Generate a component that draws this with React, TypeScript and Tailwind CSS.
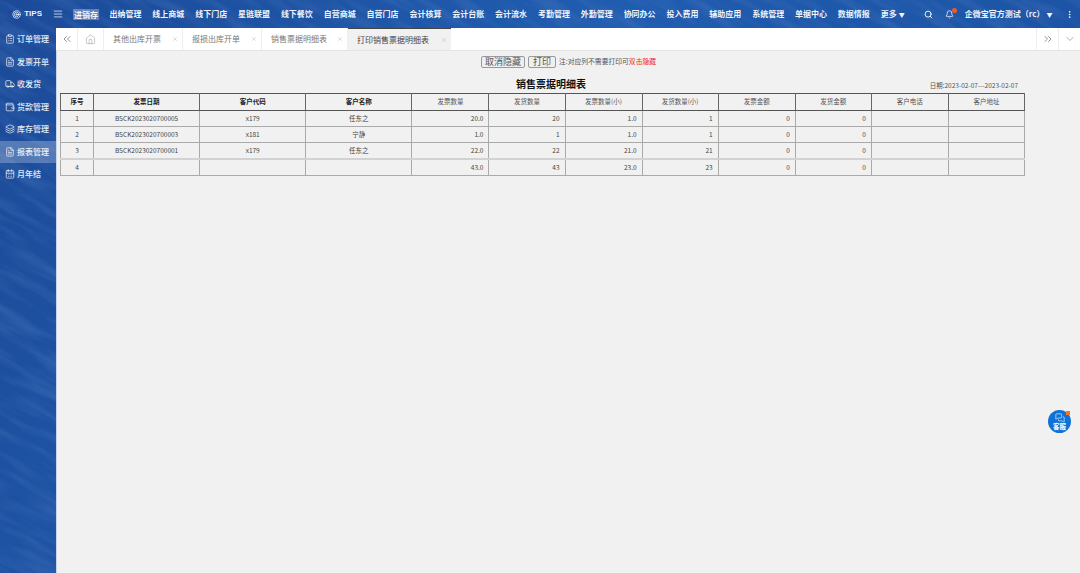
import { AlignJustify, Bell, CalendarDays, ChevronDown, ChevronsLeft, ChevronsRight, ClipboardList, EllipsisVertical, FileText, Home, Layers, MessagesSquare, Search, Target, Truck, Wallet, X } from "lucide-react";

const navItems = ["出纳管理", "线上商城", "线下门店", "星链联盟", "线下餐饮", "自营商城", "自营门店", "会计核算", "会计台账", "会计流水", "考勤管理", "外勤管理", "协同办公", "投入费用", "辅助应用", "系统管理", "单据中心", "数据情报"];

const sideItems = [
  { label: "订单管理", Icon: ClipboardList },
  { label: "发票开单", Icon: FileText },
  { label: "收发货", Icon: Truck },
  { label: "货款管理", Icon: Wallet },
  { label: "库存管理", Icon: Layers },
  { label: "报表管理", Icon: FileText, active: true },
  { label: "月年结", Icon: CalendarDays },
];

const columns = [
  { title: "序号", width: "w-[33px]", bold: true },
  { title: "发票日期", width: "w-[106px]", bold: true },
  { title: "客户代码", width: "w-[106px]", bold: true },
  { title: "客户名称", width: "w-[106px]", bold: true },
  { title: "发票数量", width: "w-[77px]" },
  { title: "发货数量", width: "w-[76px]" },
  { title: "发票数量(小)", width: "w-[77px]" },
  { title: "发货数量(小)", width: "w-[76px]" },
  { title: "发票金额", width: "w-[77px]" },
  { title: "发货金额", width: "w-[76px]" },
  { title: "客户电话", width: "w-[77px]" },
  { title: "客户地址", width: "w-[76px]" },
];

const rows = [
  ["1", "BSCK2023020700005", "x179", "任东之", "20.0", "20", "1.0", "1", "0", "0", "", ""],
  ["2", "BSCK2023020700003", "x181", "宁静", "1.0", "1", "1.0", "1", "0", "0", "", ""],
  ["3", "BSCK2023020700001", "x179", "任东之", "22.0", "22", "21.0", "21", "0", "0", "", ""],
  ["4", "", "", "", "43.0", "43", "23.0", "23", "0", "0", "", ""],
];

const tabs = [
  { label: "其他出库开票", width: "w-[79px]" },
  { label: "报损出库开单", width: "w-[79px]" },
  { label: "销售票据明细表", width: "w-[86px]" },
];

export default function App() {
  return (
    <div className="relative flex h-[573px] w-[1080px] flex-col overflow-hidden bg-[linear-gradient(115deg,#1c4a98_0%,#205cb0_45%,#1b4f9f_100%)] font-['Noto_Sans_CJK_SC','Liberation_Sans',sans-serif]">
      <svg className="pointer-events-none absolute inset-0 h-full w-full opacity-45" aria-hidden="true">
        <filter id="water" x="0" y="0" width="100%" height="100%">
          <feTurbulence type="fractalNoise" baseFrequency="0.015 0.09" numOctaves="3" seed="7" />
          <feColorMatrix values="0 0 0 0 0.06 0 0 0 0 0.18 0 0 0 0 0.5 2.2 0 0 0 -0.9" />
        </filter>
        <g transform="rotate(28)">
          <rect x="-400" y="-800" width="2000" height="1800" filter="url(#water)" />
        </g>
      </svg>

      <header className="relative flex h-[28px] shrink-0 items-center text-[8px] font-bold text-white/95">
        <div className="flex w-[50px] items-center justify-end gap-[3px] pr-[8px]">
          <Target size={9} strokeWidth={2} />
          <span className="font-['Liberation_Sans'] font-bold">TIPS</span>
        </div>
        <AlignJustify size={10} strokeWidth={1.75} className="ml-[3px]" />
        <span className="ml-[10px] bg-white/30 px-px text-[8px] leading-[11px]">进销存</span>
        <nav className="ml-[10.5px] flex gap-[10.85px]">
          {navItems.map((item) => (
            <span key={item} className="w-[32px] whitespace-nowrap">
              {item}
            </span>
          ))}
        </nav>
        <span className="ml-[11px] flex items-center gap-[2px]">
          更多
          <span className="text-[6px]">▼</span>
        </span>
        <Search size={9} strokeWidth={2.5} className="ml-[19px]" />
        <span className="relative ml-[12px] flex">
          <Bell size={9} />
          <span className="absolute -right-[3px] -top-[2px] h-[5px] w-[5px] rounded-full bg-[#f05a22]" />
        </span>
        <span className="ml-[11px] whitespace-nowrap">企微宝官方测试（rc）</span>
        <span className="ml-[2px] text-[6px]">▼</span>
        <EllipsisVertical size={9} strokeWidth={2.5} className="ml-[13px]" />
      </header>

      <div className="relative flex min-h-0 flex-1">
        <aside className="w-[56px] shrink-0 text-[8px] font-medium text-white/90">
          {sideItems.map(({ label, Icon, active }) => (
            <div key={label} className={`flex h-[22.5px] items-center gap-[2px] pl-[5px] ${active ? "bg-white/25" : ""}`}>
              <Icon size={10} strokeWidth={1.75} className="shrink-0" />
              <span className="whitespace-nowrap">{label}</span>
            </div>
          ))}
        </aside>

        <main className="flex min-w-0 flex-1 flex-col border-l border-[#c9d5ea] bg-[#f1f1f1]">
          <div className="-ml-px flex h-[23px] shrink-0 items-stretch border-b border-[#e4e4e4] bg-white text-[8px] text-[#777]">
            <div className="flex w-[22px] items-center justify-center border-r border-[#eee]">
              <ChevronsLeft size={12} strokeWidth={1.25} className="text-[#555]" />
            </div>
            <div className="flex w-[26px] items-center justify-center border-r border-[#eee]">
              <Home size={11} strokeWidth={1} className="text-[#888]" />
            </div>
            {tabs.map((tab) => (
              <div key={tab.label} className={`flex ${tab.width} items-center justify-between border-r border-[#eee] pl-[9px] pr-[4px]`}>
                <span className="whitespace-nowrap">{tab.label}</span>
                <X size={6} className="text-[#bbb]" />
              </div>
            ))}
            <div className="flex w-[103px] items-center justify-between border-t border-[#444] bg-[#f1f1f1] pl-[9px] pr-[4px] text-[#444]">
              <span className="whitespace-nowrap">打印销售票据明细表</span>
              <X size={6} className="text-[#bbb]" />
            </div>
            <div className="ml-auto flex w-[22px] items-center justify-center border-l border-[#eee]">
              <ChevronsRight size={12} strokeWidth={1.25} className="text-[#555]" />
            </div>
            <div className="flex w-[22px] items-center justify-center border-l border-[#eee]">
              <ChevronDown size={12} strokeWidth={1} className="text-[#555]" />
            </div>
          </div>

          <div className="flex h-[19px] items-center pl-[424px] pt-[2px]">
            <button className="h-[12px] w-[44px] rounded-[2px] border border-[#999] bg-[#efefef] text-[9px] leading-[10px] text-[#555]">取消隐藏</button>
            <button className="ml-[3px] h-[12px] w-[28px] rounded-[2px] border border-[#999] bg-[#efefef] text-[9px] leading-[10px] text-[#555]">打印</button>
            <span className="ml-[3px] text-[6.8px] text-[#555]">
              注:对应列不需要打印可<span className="text-[#f01c2c]">双击隐藏</span>
            </span>
          </div>

          <div className="relative ml-[3px] h-[23px] w-[965px]">
            <h1 className="pl-[17px] pt-[6px] text-center text-[10px] font-bold leading-[16px] text-[#111]">销售票据明细表</h1>
            <span className="absolute right-[7px] top-[10px] text-[6.5px] leading-[10px] text-[#555]">日期:2023-02-07---2023-02-07</span>
          </div>

          <table className="ml-[3px] w-[965px] table-fixed border-collapse border border-[#aaa] text-[6.5px] text-[#444]">
            <thead>
              <tr className="h-[17px]">
                {columns.map((col) => (
                  <th key={col.title} className={`${col.width} border border-y-[#555] border-x-[#666] ${col.bold ? "font-bold text-[#222]" : "font-normal text-[#555]"}`}>
                    {col.title}
                  </th>
                ))}
              </tr>
            </thead>
            <tbody>
              {rows.map((row) => (
                <tr key={row[0]} className="h-[16.2px]">
                  {row.map((cell, index) => (
                    <td key={index} className={`border border-[#aaa] p-0 ${row[0] === "4" ? "border-t-2 border-t-[#d2d2d2]" : ""} ${index < 4 ? "text-center" : "pr-[5px] text-right"}`}>
                      {cell}
                    </td>
                  ))}
                </tr>
              ))}
            </tbody>
          </table>
        </main>
      </div>

      <div className="absolute left-[1048px] top-[410px] flex h-[23px] w-[23px] flex-col items-center justify-center rounded-full bg-[#0f72d6] text-white">
        <MessagesSquare size={10} strokeWidth={1.5} />
        <span className="text-[6.5px] font-bold leading-[7px]">客服</span>
        <span className="absolute right-[1px] top-[1px] h-[4px] w-[4px] bg-[#f0762a]" />
      </div>
    </div>
  );
}
